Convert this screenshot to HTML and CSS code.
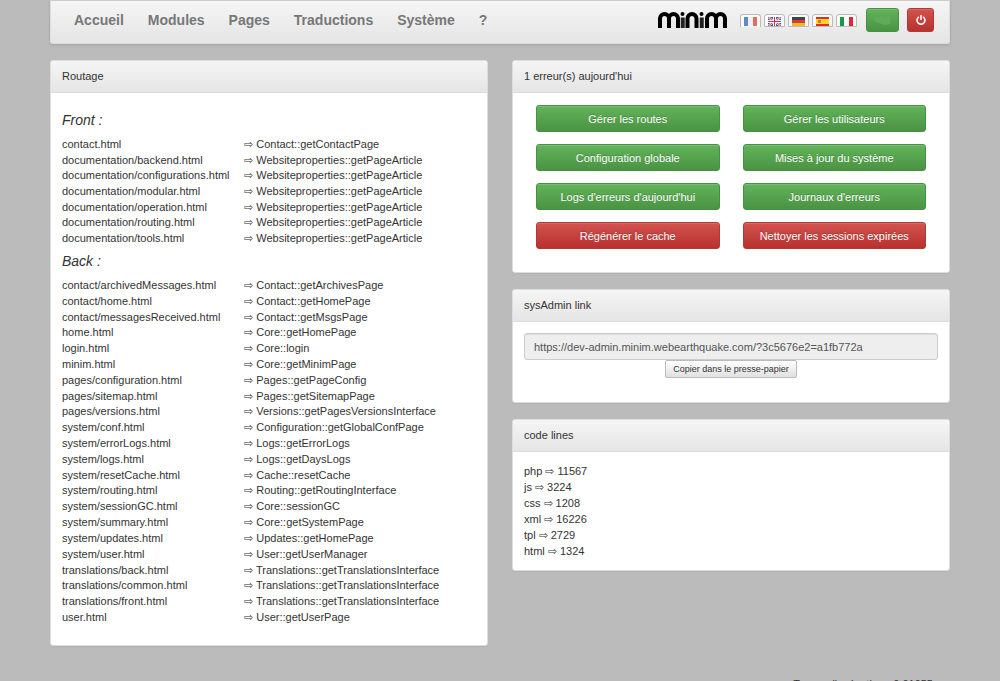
FILE: index.html
```html
<!DOCTYPE html>
<html lang="fr">
<head>
<meta charset="utf-8">
<title>Minim – Système</title>
<link rel="stylesheet" href="styles.css">
</head>
<body>
<div class="container">
  <header class="navbar">
    <nav class="menu">
      <a href="#">Accueil</a>
      <a href="#">Modules</a>
      <a href="#">Pages</a>
      <a href="#">Traductions</a>
      <a href="#">Système</a>
      <a href="#">?</a>
    </nav>
    <div class="tools">
      <svg class="logo" viewBox="0 0 70 18" role="img" aria-label="minim">
        <g fill="none" stroke="#000" stroke-width="4">
          <path d="M2 17V7.500a4.500 4.500 0 0 1 9 0V17M11 7.500a4.500 4.500 0 0 1 9 0V17"/>
          <path d="M29.500 17V7.500a4.500 4.500 0 0 1 9 0V17"/>
          <path d="M49 17V7.500a4.500 4.500 0 0 1 9 0V17M58 7.500a4.500 4.500 0 0 1 9 0V17"/>
          <path stroke="#222" d="M24.750 6.500V17M43.750 6.500V17"/>
        </g>
        <circle cx="24.500" cy="3" r="2"/><circle cx="43.500" cy="3" r="2"/>
      </svg>
      <div class="flags">
        <a class="flag current" href="#" aria-label="Français"><svg viewBox="0 0 13 9"><path fill="#5c8bc8" d="M0 0h4v9H0z"/><path fill="#f0f0f4" d="M4 0h5v9H4z"/><path fill="#e0705c" d="M9 0h4v9H9z"/></svg></a>
        <a class="flag" href="#" aria-label="English"><svg viewBox="0 0 13 9"><path fill="#2f5ba5" d="M0 0h13v9H0z"/><path stroke="#fff" stroke-width="2" d="M0 0l13 9M13 0L0 9"/><path stroke="#d8404c" stroke-width="1" d="M0 0l13 9M13 0L0 9"/><path fill="#fff" d="M5 0h3v9H5zM0 3h13v3H0z"/><path fill="#d8303c" d="M6 0h1v9H6zM0 4h13v1H0z"/></svg></a>
        <a class="flag" href="#" aria-label="Deutsch"><svg viewBox="0 0 13 9"><path fill="#444" d="M0 0h13v3H0z"/><path fill="#db3a35" d="M0 3h13v3H0z"/><path fill="#eab82c" d="M0 6h13v3H0z"/></svg></a>
        <a class="flag" href="#" aria-label="Español"><svg viewBox="0 0 13 9"><path fill="#e4292c" d="M0 0h13v9H0z"/><path fill="#fbd92c" d="M0 2h13v5H0z"/><path fill="#d8742c" d="M2 3h3v3H2z"/></svg></a>
        <a class="flag" href="#" aria-label="Italiano"><svg viewBox="0 0 13 9"><path fill="#159a49" d="M0 0h4v9H0z"/><path fill="#fff" d="M4 0h5v9H4z"/><path fill="#e5272d" d="M9 0h4v9H9z"/></svg></a>
      </div>
      <button class="btn btn-success btn-user" type="button" aria-label="Compte"><svg viewBox="0 0 18 11"><path fill="#5fab5c" d="M1 2L7 1L11 2L14 0L17 2L16 9L11 10L2 7L0 4Z"/></svg></button>
      <button class="btn btn-danger btn-power" type="button" aria-label="Déconnexion"><svg viewBox="0 0 10 10"><path fill="none" stroke="#fff" stroke-width="1.500" d="M3 1.800A4 4 0 1 0 7 1.800M5 0V5"/></svg></button>
    </div>
  </header>

  <main class="columns">
    <section class="panel">
      <h2 class="panel-title">Routage</h2>
      <div class="panel-body routing">
        <h3 class="group">Front :</h3>
        <table class="routes routes-front">
          <tr><td>contact.html</td><td>⇨ Contact::getContactPage</td></tr>
          <tr><td>documentation/backend.html</td><td>⇨ Websiteproperties::getPageArticle</td></tr>
          <tr><td>documentation/configurations.html</td><td>⇨ Websiteproperties::getPageArticle</td></tr>
          <tr><td>documentation/modular.html</td><td>⇨ Websiteproperties::getPageArticle</td></tr>
          <tr><td>documentation/operation.html</td><td>⇨ Websiteproperties::getPageArticle</td></tr>
          <tr><td>documentation/routing.html</td><td>⇨ Websiteproperties::getPageArticle</td></tr>
          <tr><td>documentation/tools.html</td><td>⇨ Websiteproperties::getPageArticle</td></tr>
        </table>
        <h3 class="group">Back :</h3>
        <table class="routes routes-back">
          <tr><td>contact/archivedMessages.html</td><td>⇨ Contact::getArchivesPage</td></tr>
          <tr><td>contact/home.html</td><td>⇨ Contact::getHomePage</td></tr>
          <tr><td>contact/messagesReceived.html</td><td>⇨ Contact::getMsgsPage</td></tr>
          <tr><td>home.html</td><td>⇨ Core::getHomePage</td></tr>
          <tr><td>login.html</td><td>⇨ Core::login</td></tr>
          <tr><td>minim.html</td><td>⇨ Core::getMinimPage</td></tr>
          <tr><td>pages/configuration.html</td><td>⇨ Pages::getPageConfig</td></tr>
          <tr><td>pages/sitemap.html</td><td>⇨ Pages::getSitemapPage</td></tr>
          <tr><td>pages/versions.html</td><td>⇨ Versions::getPagesVersionsInterface</td></tr>
          <tr><td>system/conf.html</td><td>⇨ Configuration::getGlobalConfPage</td></tr>
          <tr><td>system/errorLogs.html</td><td>⇨ Logs::getErrorLogs</td></tr>
          <tr><td>system/logs.html</td><td>⇨ Logs::getDaysLogs</td></tr>
          <tr><td>system/resetCache.html</td><td>⇨ Cache::resetCache</td></tr>
          <tr><td>system/routing.html</td><td>⇨ Routing::getRoutingInterface</td></tr>
          <tr><td>system/sessionGC.html</td><td>⇨ Core::sessionGC</td></tr>
          <tr><td>system/summary.html</td><td>⇨ Core::getSystemPage</td></tr>
          <tr><td>system/updates.html</td><td>⇨ Updates::getHomePage</td></tr>
          <tr><td>system/user.html</td><td>⇨ User::getUserManager</td></tr>
          <tr><td>translations/back.html</td><td>⇨ Translations::getTranslationsInterface</td></tr>
          <tr><td>translations/common.html</td><td>⇨ Translations::getTranslationsInterface</td></tr>
          <tr><td>translations/front.html</td><td>⇨ Translations::getTranslationsInterface</td></tr>
          <tr><td>user.html</td><td>⇨ User::getUserPage</td></tr>
        </table>
      </div>
    </section>

    <div class="side">
      <section class="panel">
        <h2 class="panel-title">1 erreur(s) aujourd'hui</h2>
        <div class="panel-body actions">
          <button class="btn btn-success" type="button">Gérer les routes</button>
          <button class="btn btn-success" type="button">Gérer les utilisateurs</button>
          <button class="btn btn-success" type="button">Configuration globale</button>
          <button class="btn btn-success" type="button">Mises à jour du système</button>
          <button class="btn btn-success" type="button">Logs d'erreurs d'aujourd'hui</button>
          <button class="btn btn-success" type="button">Journaux d'erreurs</button>
          <button class="btn btn-danger" type="button">Régénérer le cache</button>
          <button class="btn btn-danger" type="button">Nettoyer les sessions expirées</button>
        </div>
      </section>

      <section class="panel">
        <h2 class="panel-title" id="link-title">sysAdmin link</h2>
        <div class="panel-body link">
          <input class="link-field" type="text" readonly aria-labelledby="link-title" value="https://dev-admin.minim.webearthquake.com/?3c5676e2=a1fb772a">
          <button class="copy" type="button">Copier dans le presse-papier</button>
        </div>
      </section>

      <section class="panel">
        <h2 class="panel-title">code lines</h2>
        <ul class="panel-body lines">
          <li>php ⇨ 11567</li>
          <li>js ⇨ 3224</li>
          <li>css ⇨ 1208</li>
          <li>xml ⇨ 16226</li>
          <li>tpl ⇨ 2729</li>
          <li>html ⇨ 1324</li>
        </ul>
      </section>
    </div>
  </main>
  <footer class="footer">Temps d'exécution : 0.01955</footer>
</div>
</body>
</html>
```
FILE: styles.css
```css
* { box-sizing: border-box; }

body {
  margin: 0;
  background: #bbb;
  color: #333;
  font: 11px/16px "Liberation Sans", Arial, sans-serif;
}

.container { width: 90%; margin: 0 auto; }

.navbar {
  display: flex;
  justify-content: space-between;
  padding: 7px 15px 11px 23px;
  border: 1px solid #ddd;
  border-top-color: #ccc;
  border-radius: 0 0 3px 3px;
  background: linear-gradient(#f5f5f5, #e5e5e5);
  box-shadow: 0 1px 3px rgba(0, 0, 0, 0.15);
}

.menu { display: flex; gap: 24px; padding-top: 4px; }

.menu a {
  color: #777;
  font-size: 14px;
  font-weight: bold;
  text-decoration: none;
}

.tools { display: flex; gap: 8px; }
.logo { width: 70px; height: 18px; margin: 3px 4px 0 0; }
.flags { display: flex; gap: 3px; margin: 6px 1px 0 0; }

.flag {
  display: block;
  width: 21px;
  height: 13px;
  padding: 2px 3px 0;
  border: 1px solid #bbb;
  border-radius: 3px 3px 0 0;
  background: #fafafa;
}

.flag.current { border-bottom: 0; }
.flag svg { display: block; width: 13px; height: 9px; }

.btn {
  display: flex;
  align-items: center;
  justify-content: center;
  height: 27px;
  padding: 0 8px;
  border: 1px solid;
  border-radius: 3px;
  color: #fff;
  font: inherit;
  text-shadow: 0 -1px 0 rgba(0, 0, 0, 0.2);
  box-shadow: inset 0 1px 0 rgba(255, 255, 255, 0.15);
}

.btn-success {
  border-color: #459145;
  background: linear-gradient(#62b45a, #4a9343);
}

.btn-danger {
  border-color: #b23835;
  background: linear-gradient(#d2534f, #b8312e);
}

.btn-user { width: 33px; height: 24px; }
.btn-user svg { flex: none; width: 18px; height: 11px; }
.btn-power { width: 27px; height: 24px; }
.btn-power svg { flex: none; width: 10px; height: 10px; }

.columns {
  display: grid;
  grid-template-columns: 1fr 1fr;
  align-items: start;
  gap: 24px;
  margin-top: 16px;
}

.side { display: grid; gap: 16px; }

.panel {
  border: 1px solid #ddd;
  border-radius: 3px;
  background: #fff;
  box-shadow: 0 1px 1px rgba(0, 0, 0, 0.05);
}

.panel-title {
  margin: 0;
  padding: 7px 11px 8px;
  border-bottom: 1px solid #ddd;
  border-radius: 2px 2px 0 0;
  background: linear-gradient(#f5f5f5, #e5e5e5);
  font-size: 11px;
  font-weight: normal;
}

.panel-body { padding: 11px 11px 20px; }
.routing { padding-top: 12px; }

.group {
  margin: 7px 0 8px;
  font-size: 14px;
  font-style: italic;
  font-weight: normal;
}

.routes { width: 100%; border-collapse: collapse; }
.routes-front { height: 110px; }
.routes-back { height: 348px; }

.routes td {
  width: 56%;
  padding: 0;
  line-height: 14px;
  white-space: nowrap;
}

.routes td:first-child { width: 44%; }

.actions {
  display: grid;
  grid-template-columns: 1fr 1fr;
  gap: 12px 23px;
  padding: 12px 23px 23px;
}

.link {
  display: flex;
  flex-direction: column;
  align-items: center;
  padding-bottom: 24px;
}

.link-field {
  width: 100%;
  height: 27px;
  padding: 4px 9px;
  border: 1px solid #ccc;
  border-radius: 3px;
  background: #eee;
  color: #555;
  font: inherit;
  box-shadow: inset 0 1px 1px rgba(0, 0, 0, 0.07);
}

.copy {
  height: 18px;
  padding: 0 7px;
  border: 1px solid #bbb;
  border-radius: 2px;
  background: linear-gradient(#fff, #e0e0e0);
  color: #333;
  font: 9px/14px "Liberation Sans", Arial, sans-serif;
}

.lines { margin: 0; padding-bottom: 11px; list-style: none; }

.footer {
  margin-top: 30px;
  padding-right: 17px;
  text-align: right;
}
```
